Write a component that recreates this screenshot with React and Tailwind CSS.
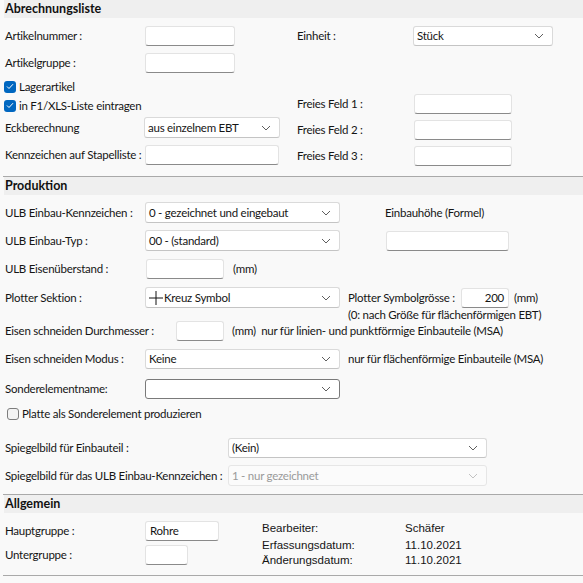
import React from "react";

const Chevron = ({ color = "#5f5f5f" }) => (
  <svg width="10" height="6" viewBox="0 0 10 6" className="shrink-0">
    <polyline points="1,1 5,5 9,1" fill="none" stroke={color} strokeWidth="1" />
  </svg>
);

const Input = ({ w, value, right }) => (
  <div
    className={`h-[20px] bg-white border border-[#e3e3e3] border-b-[#8a8a8a] rounded-[3px] flex items-center px-[4px] shrink-0 ${right ? "justify-end" : ""}`}
    style={{ width: w }}
  >
    {value}
  </div>
);

const Select = ({ w, value, h = 21, dark, disabled, children }) => (
  <div
    className={`rounded-[3px] border flex items-center pl-[3px] pr-[8px] shrink-0 ${
      dark
        ? "bg-white border-[#7a7a7a]"
        : disabled
        ? "bg-[#fbfbfb] border-[#e6e6e6] text-[#9a9a9a]"
        : "bg-white border-[#dadada] border-b-[#c4c4c4]"
    }`}
    style={{ width: w, height: h }}
  >
    <div className="flex-1 flex items-center">{children || value}</div>
    <Chevron color={disabled ? "#c2c2c2" : "#5f5f5f"} />
  </div>
);

const Check = ({ checked }) =>
  checked ? (
    <div className="w-[12px] h-[12px] rounded-[3px] bg-[#0067c0] flex items-center justify-center shrink-0">
      <svg width="8" height="7" viewBox="0 0 8 7">
        <polyline points="1,3.5 3,5.5 7,1.2" fill="none" stroke="white" strokeWidth="1" />
      </svg>
    </div>
  ) : (
    <div className="w-[12px] h-[12px] rounded-[3px] border border-[#7d7d7d] bg-[#f3f3f3] shrink-0" />
  );

const Header = ({ title }) => (
  <div className="h-[18px] bg-[#efefef] ml-[4px] pl-[1px] flex items-center font-bold text-[#111] text-[12.5px] tracking-normal">
    {title}
  </div>
);

const Sep = () => <div className="h-px bg-[#a9a9a9] ml-[3px]" />;

const L = ({ w, children }) => (
  <span className="shrink-0 whitespace-nowrap" style={{ width: w }}>
    {children}
  </span>
);

export default function App() {
  return (
    <div
      className="w-[583px] h-[583px] bg-[#f9f9f9] text-[11.5px] tracking-[-0.25px] text-[#151515] overflow-hidden whitespace-nowrap"
      style={{ fontFamily: 'Lato, "Noto Sans", sans-serif' }}
    >
      {/* Abrechnungsliste */}
      <Header title="Abrechnungsliste" />
      <div className="flex pl-[5px] h-[158px]">
        <div className="w-[292px] pt-[8px]">
          <div className="flex items-center h-[20px]">
            <L w={140}>Artikelnummer :</L>
            <Input w={90} />
          </div>
          <div className="flex items-center h-[20px] mt-[7px]">
            <L w={140}>Artikelgruppe :</L>
            <Input w={90} />
          </div>
          <div className="flex items-center h-[19px] mt-[4px] -ml-[1px] gap-[3px]">
            <Check checked />
            <span>Lagerartikel</span>
          </div>
          <div className="flex items-center h-[19px] -ml-[1px] gap-[3px]">
            <Check checked />
            <span>in F1/XLS-Liste eintragen</span>
          </div>
          <div className="flex items-center h-[21px] mt-[2px]">
            <L w={139}>Eckberechnung</L>
            <Select w={136} value="aus einzelnem EBT" />
          </div>
          <div className="flex items-center h-[20px] mt-[7px]">
            <L w={140}>Kennzeichen auf Stapelliste :</L>
            <Input w={134} />
          </div>
        </div>
        <div className="pt-[8px]">
          <div className="flex items-center h-[20px]">
            <L w={116}>Einheit :</L>
            <Select w={140} h={20} value="Stück" />
          </div>
          <div className="flex items-center h-[20px] mt-[48px]">
            <L w={117}>Freies Feld 1 :</L>
            <Input w={98} />
          </div>
          <div className="flex items-center h-[20px] mt-[6px]">
            <L w={117}>Freies Feld 2 :</L>
            <Input w={98} />
          </div>
          <div className="flex items-center h-[20px] mt-[6px]">
            <L w={117}>Freies Feld 3 :</L>
            <Input w={98} />
          </div>
        </div>
      </div>
      <Sep />

      {/* Produktion */}
      <Header title="Produktion" />
      <div className="pl-[5px] h-[299px] pt-[7px]">
        <div className="flex items-center h-[21px]">
          <L w={140}>ULB Einbau-Kennzeichen :</L>
          <Select w={195} value="0 - gezeichnet und eingebaut" />
          <span className="ml-[45px]">Einbauhöhe (Formel)</span>
        </div>
        <div className="flex items-center h-[21px] mt-[7px]">
          <L w={140}>ULB Einbau-Typ :</L>
          <Select w={195} value="00 - (standard)" />
          <div className="ml-[46px]">
            <Input w={123} />
          </div>
        </div>
        <div className="flex items-center h-[20px] mt-[8px]">
          <L w={141}>ULB Eisenüberstand :</L>
          <Input w={78} />
          <span className="ml-[9px]">(mm)</span>
        </div>
        <div className="flex items-center h-[21px] mt-[8px]">
          <L w={140}>Plotter Sektion :</L>
          <Select w={195}>
            <svg width="14" height="14" viewBox="0 0 14 14" className="mr-[1px]">
              <line x1="0" y1="7" x2="14" y2="7" stroke="#111" strokeWidth="1" />
              <line x1="7" y1="0" x2="7" y2="14" stroke="#111" strokeWidth="1" />
            </svg>
            <span>Kreuz Symbol</span>
          </Select>
          <span className="ml-[8px] w-[113px] shrink-0">Plotter Symbolgrösse :</span>
          <Input w={48} value="200" right />
          <span className="ml-[5px]">(mm)</span>
        </div>
        <div className="h-[13px] leading-[13px] pl-[343px]">(0: nach Größe für flächenförmigen EBT)</div>
        <div className="flex items-center h-[20px]">
          <L w={171}>Eisen schneiden Durchmesser :</L>
          <Input w={48} />
          <span className="ml-[8px]">(mm)&nbsp;&nbsp;nur für linien- und punktförmige Einbauteile (MSA)</span>
        </div>
        <div className="flex items-center h-[20px] mt-[8px]">
          <L w={140}>Eisen schneiden Modus :</L>
          <Select w={195} h={20} value="Keine" />
          <span className="ml-[8px]">nur für flächenförmige Einbauteile (MSA)</span>
        </div>
        <div className="flex items-center h-[20px] mt-[10px]">
          <L w={140}>Sonderelementname:</L>
          <Select w={195} h={20} dark />
        </div>
        <div className="flex items-center h-[18px] mt-[6px] pl-[2px] gap-[3px]">
          <Check />
          <span>Platte als Sonderelement produzieren</span>
        </div>
        <div className="flex items-center h-[20px] mt-[15px]">
          <L w={223}>Spiegelbild für Einbauteil :</L>
          <Select w={259} h={20} value="(Kein)" />
        </div>
        <div className="flex items-center h-[21px] mt-[7px]">
          <L w={223}>Spiegelbild für das ULB Einbau-Kennzeichen :</L>
          <Select w={259} disabled value="1 - nur gezeichnet" />
        </div>
      </div>
      <Sep />

      {/* Allgemein */}
      <Header title="Allgemein" />
      <div className="flex pl-[5px] h-[62px]">
        <div className="w-[257px] pt-[8px]">
          <div className="flex items-center h-[20px]">
            <L w={140}>Hauptgruppe :</L>
            <Input w={74} value="Rohre" />
          </div>
          <div className="flex items-center h-[20px] mt-[4px]">
            <L w={140}>Untergruppe :</L>
            <Input w={43} />
          </div>
        </div>
        <div className="pt-[8px] text-[11.5px] tracking-normal" style={{ fontFamily: '"Liberation Sans", sans-serif' }}>
          <div className="flex h-[15px] items-center">
            <L w={143}>Bearbeiter:</L>
            <span>Schäfer</span>
          </div>
          <div className="flex h-[15px] items-center mt-[2px]">
            <L w={143}>Erfassungsdatum:</L>
            <span>11.10.2021</span>
          </div>
          <div className="flex h-[15px] items-center">
            <L w={143}>Änderungsdatum:</L>
            <span>11.10.2021</span>
          </div>
        </div>
      </div>
      <Sep />
    </div>
  );
}
